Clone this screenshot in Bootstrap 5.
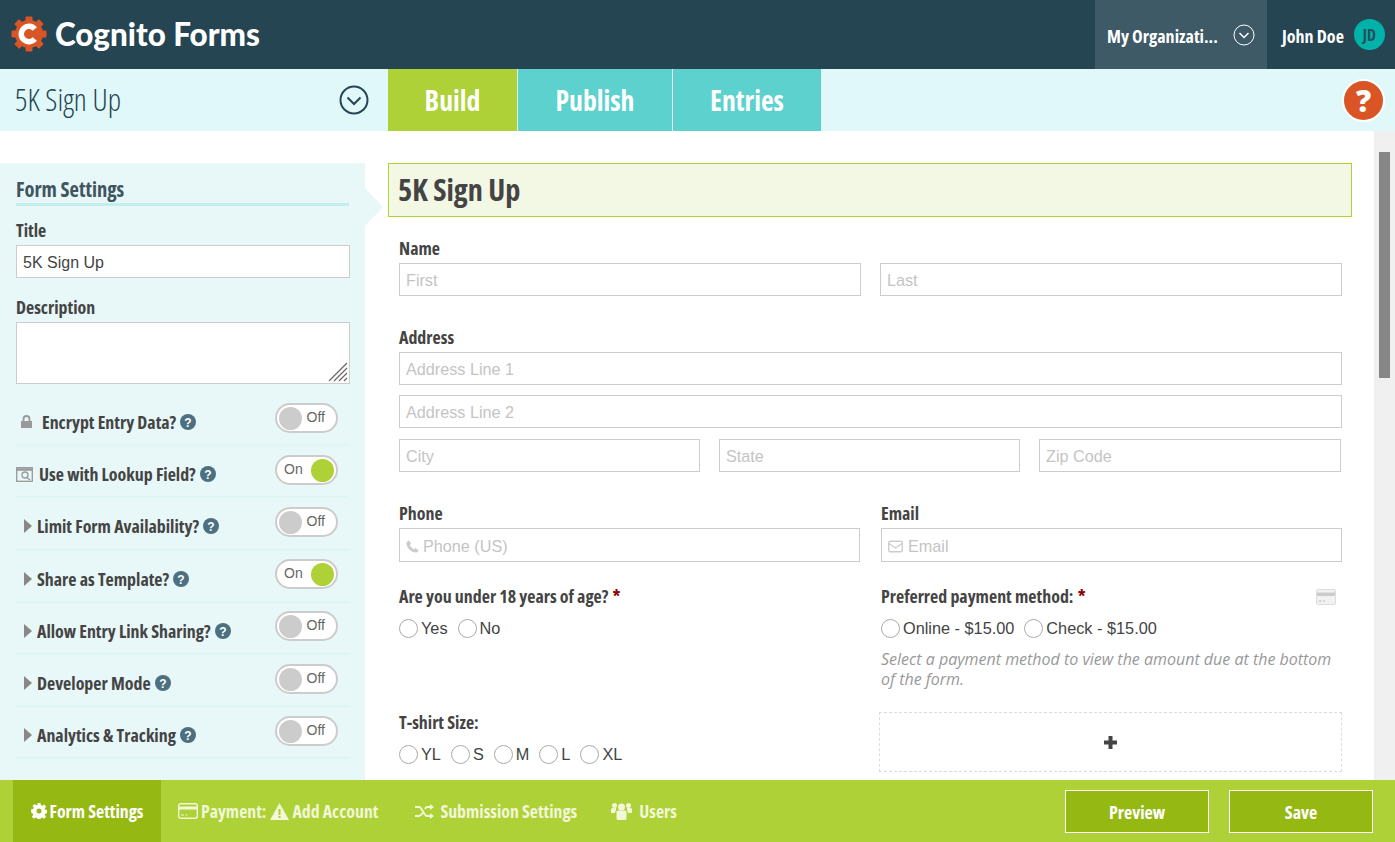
<!DOCTYPE html>
<html lang="en"><head><meta charset="utf-8"><title>Cognito Forms</title>
<link href="https://cdn.jsdelivr.net/npm/bootstrap@5.3.0/dist/css/bootstrap.min.css" rel="stylesheet">
<style>
html,body{height:842px;overflow:hidden}
body{font-family:"Liberation Sans",Arial,sans-serif;color:#444;background:#fff;width:1395px;display:flex;flex-direction:column}
.cond{font-family:"Open Sans",sans-serif;font-stretch:75%;font-weight:700}
.topbar{height:69px;background:#254552;flex:none}
.brand-name{font-family:"Lato","Inter",sans-serif;font-weight:900;font-size:31.400px;color:#fff;margin-left:8px;white-space:nowrap}
.logo-mark{margin-left:3px;margin-top:-2px}
.org-box{width:172px;background:#3d5a66;color:#fff;font-size:18px;padding-left:12px;padding-right:12px}
.org-box>span{margin-top:4px}
.user-box{width:128px;color:#fff;font-size:18px;padding-left:15px;white-space:nowrap}
.user-name{margin-top:4px}
.avatar{width:31px;height:31px;border-radius:50%;background:#00b2a9;color:#25505c;font-size:16px;margin-left:10px;flex:none}
.subbar{height:62px;background:#e1f8fa;flex:none}
.form-pick{width:388px;padding:0 19px 0 15px;font-family:"Open Sans",sans-serif;font-stretch:75%;font-weight:300;font-size:30.400px;color:#254552}
.tabx{height:62px;font-size:27.700px;color:#fff;background:#5cd1cd;border-right:1px solid #e1f8fa;justify-content:center;padding-top:1px}
.tabx.on{background:#add136;width:130px}
.tab-p{width:155px}.tab-e{width:148px;border-right:0}
.help{width:39px;height:39px;border-radius:50%;background:#d95525;border:2px solid #fff;color:#fff;font-size:30px;font-family:"Open Sans",sans-serif;font-weight:800;margin-right:10px;box-sizing:content-box}
.workarea{flex:1;min-height:0;overflow:hidden}
.side{width:365px;margin-top:32px;background:#e8f7f8;padding:14px 15px 0 16px;position:relative;flex:none}
.side::after{content:"";position:absolute;left:365px;top:25px;border-style:solid;border-width:19px 0 19px 18px;border-color:transparent transparent transparent #e8f7f8}
.side-head{font-size:20.500px;line-height:24px;color:#3f5560;border-bottom:3px solid #c3eeee;padding-bottom:2px;margin-right:1px}
.lab{font-size:17.900px;line-height:24px;color:#444;white-space:nowrap}
.inp{border:1px solid #ccc;background:#fff;font-size:16px;color:#444;height:33px;line-height:33px;padding:0 6px;display:block;width:100%}
.desc{height:62px;position:relative;margin-top:3px}
.grip{position:absolute;right:1px;bottom:1px}
.setrow{height:52.200px;border-bottom:2px solid #e0f6f6;padding-right:11px;padding-top:6px;margin-right:1px}
.q{width:16px;height:16px;margin-left:4px;flex:none}
.ico{flex:none}
.tog{width:63px;height:30px;border-radius:15px;background:#fff;border:2px solid #ccc;position:relative;font-size:14px;color:#666;margin-left:auto;flex:none;margin-top:-9px}
.tog i{position:absolute;width:23px;height:23px;border-radius:50%;top:2px;background:#ccc;left:2px}
.tog span{position:absolute;top:3px;line-height:18px;right:11px}
.tog.yes i{left:auto;right:2px;background:#add136}
.tog.yes span{right:auto;left:7px}
.lock-lab{margin-left:1px}
.look-lab{margin-left:2px}
.tri-lab{margin-left:1px}
.canvas{flex:1;padding:32px 22px 0 23px;min-width:0}
.title-band{height:54px;background:#f3f8e4;border:1px solid #add136;font-size:30.300px;line-height:52px;padding-left:9px;color:#444}
.fgrid{padding:0 10px 0 11px}
.flab{font-size:17.900px;line-height:24px;color:#444;display:block;margin-bottom:3px}
.ph{border:1px solid #ccc;height:33px;line-height:33px;color:#c4c4c4;font-size:16.200px;padding-left:6px;background:#fff}
.ph-tall{height:34px;line-height:34px}
.ph svg{vertical-align:-1px}
.gap-phone{margin-right:4px}
.gap-mail{margin-right:5px}
.cols{display:grid;grid-template-columns:462px 462px;column-gap:19px}
.cols3{display:grid;grid-template-columns:301px 301px 302px;column-gap:19px}
.shift1{margin-left:1px}
.radio{width:19px;height:19px;border-radius:50%;border:1px solid #aaa;background:#fff;display:inline-block;flex:none;margin-right:3px}
.opts{font-size:16.300px;line-height:20px;color:#444;column-gap:10px;margin-top:10px}
.req{color:#8b0000;margin-left:1px}
.hint{font-family:"Open Sans",sans-serif;font-style:italic;font-size:16px;line-height:20px;color:#999;margin-top:11px}
.adder{border:1px dashed #ddd;height:60px;margin-left:-1px;margin-top:5px}
.qcol{height:123px}
.track{width:21px;background:#f0f0f0;flex:none;padding-top:21px}
.thumb{height:226px;width:11px;background:#868686;margin-left:5px}
.foot{height:62px;background:#add136;flex:none;padding-left:13px;padding-right:22px;z-index:2}
.foot-tab{height:62px;color:#f1f7d7;font-size:17.800px;padding:0 17px;white-space:nowrap}
.foot-tab.on{background:#96b812;color:#fff;width:148px;padding:0}
.foot-tab.sub{padding-left:20px;padding-right:15px}
.foot-tab.usr{padding-left:19px}
.foot-tab svg{margin-right:3px}
.foot-tab.sub svg{margin-right:6px}
.foot-tab.usr svg{margin-right:7px}
.fbtn{width:144px;height:43px;background:#96b812;border:1px solid #fff;color:#fff;font-size:18px;border-radius:0;padding:2px 0 0}
.fbtn:hover{background:#96b812;color:#fff;border-color:#fff}
</style></head><body>
<header class="topbar d-flex align-items-stretch">
 <div class="d-flex align-items-center ps-2 flex-grow-1">
  <svg class="ico logo-mark" width="36" height="36" viewBox="0 0 36 36"><g fill="#d95525"><circle cx="18" cy="18" r="14"/><rect x="14.500" y="0.500" width="7" height="35" rx="1"/><rect x="0.500" y="14.500" width="35" height="7" rx="1"/><rect x="14.500" y="0.500" width="7" height="35" rx="1" transform="rotate(45 18 18)"/><rect x="14.500" y="0.500" width="7" height="35" rx="1" transform="rotate(-45 18 18)"/></g><path d="M23.800 13a7.700 7.700 0 1 0 0 10" fill="none" stroke="#fff" stroke-width="5.500"/></svg>
  <span class="brand-name">Cognito Forms</span>
 </div>
 <div class="org-box d-flex align-items-center justify-content-between cond"><span>My Organizati...</span>
  <svg width="22" height="22" viewBox="0 0 22 22" fill="none" stroke="#fff"><circle cx="11" cy="11" r="10"/><path d="M6.500 9l4.500 4.500L15.500 9" stroke-width="1.500"/></svg></div>
 <div class="user-box d-flex align-items-center cond"><span class="user-name">John Doe</span><span class="avatar d-flex align-items-center justify-content-center">JD</span></div>
</header>
<div class="subbar d-flex">
 <div class="form-pick d-flex align-items-center justify-content-between"><span>5K Sign Up</span>
  <svg width="30" height="30" viewBox="0 0 30 30" fill="none" stroke="#254552" stroke-width="2"><circle cx="15" cy="15" r="13.500"/><path d="M8.500 12.500L15 19l6.500-6.500"/></svg></div>
 <div class="tabx on cond d-flex align-items-center">Build</div>
 <div class="tabx tab-p cond d-flex align-items-center">Publish</div>
 <div class="tabx tab-e cond d-flex align-items-center">Entries</div>
 <div class="ms-auto d-flex align-items-center"><div class="help d-flex align-items-center justify-content-center">?</div></div>
</div>
<div class="workarea d-flex">
 <aside class="side">
  <div class="side-head cond">Form Settings</div>
  <div class="lab cond mt-2 pt-1">Title</div>
  <div class="inp" style="margin-top:3px">5K Sign Up</div>
  <div class="lab cond" style="margin-top:17px">Description</div>
  <div class="inp desc"><svg class="grip" width="20" height="20" viewBox="0 0 20 20" stroke="#666" stroke-width="1.200"><path d="M1 19L19 1M6 19L19 6M11 19l8-8M16 19l3-3"/></svg></div>
  <div class="setrow d-flex align-items-center" style="margin-top:10px">
   <svg class="ico ms-1 me-2" width="13" height="14" viewBox="0 0 13 14" fill="#999"><path d="M1 6h11v7H1z"/><path d="M3.500 6V4a3 3 0 0 1 6 0v2" fill="none" stroke="#999" stroke-width="1.800"/></svg>
   <span class="lab cond lock-lab">Encrypt Entry Data?</span>
   <svg class="q" viewBox="0 0 16 16"><circle cx="8" cy="8" r="8" fill="#4d7080"/><text x="8" y="12.500" text-anchor="middle" font-family="Liberation Sans" font-weight="700" font-size="12" fill="#fff">?</text></svg>
   <div class="tog"><i></i><span>Off</span></div>
  </div>
  <div class="setrow d-flex align-items-center">
   <svg class="ico me-1" width="17" height="15" viewBox="0 0 17 15" fill="none" stroke="#999" stroke-width="1.300"><rect x=".7" y=".7" width="15.600" height="13.600"/><path d="M.7 2.500h15.600" stroke-width="2.500"/><circle cx="9" cy="8" r="3"/><path d="M11 10.500l3 2.500"/></svg>
   <span class="lab cond look-lab">Use with Lookup Field?</span>
   <svg class="q" viewBox="0 0 16 16"><circle cx="8" cy="8" r="8" fill="#4d7080"/><text x="8" y="12.500" text-anchor="middle" font-family="Liberation Sans" font-weight="700" font-size="12" fill="#fff">?</text></svg>
   <div class="tog yes"><i></i><span>On</span></div>
  </div>
  <div class="setrow d-flex align-items-center">
   <svg class="ico ms-2 me-1" width="8" height="14" viewBox="0 0 8 14" fill="#888"><path d="M0 0l8 7-8 7z"/></svg>
   <span class="lab cond tri-lab">Limit Form Availability?</span>
   <svg class="q" viewBox="0 0 16 16"><circle cx="8" cy="8" r="8" fill="#4d7080"/><text x="8" y="12.500" text-anchor="middle" font-family="Liberation Sans" font-weight="700" font-size="12" fill="#fff">?</text></svg>
   <div class="tog"><i></i><span>Off</span></div>
  </div>
  <div class="setrow d-flex align-items-center">
   <svg class="ico ms-2 me-1" width="8" height="14" viewBox="0 0 8 14" fill="#888"><path d="M0 0l8 7-8 7z"/></svg>
   <span class="lab cond tri-lab">Share as Template?</span>
   <svg class="q" viewBox="0 0 16 16"><circle cx="8" cy="8" r="8" fill="#4d7080"/><text x="8" y="12.500" text-anchor="middle" font-family="Liberation Sans" font-weight="700" font-size="12" fill="#fff">?</text></svg>
   <div class="tog yes"><i></i><span>On</span></div>
  </div>
  <div class="setrow d-flex align-items-center">
   <svg class="ico ms-2 me-1" width="8" height="14" viewBox="0 0 8 14" fill="#888"><path d="M0 0l8 7-8 7z"/></svg>
   <span class="lab cond tri-lab">Allow Entry Link Sharing?</span>
   <svg class="q" viewBox="0 0 16 16"><circle cx="8" cy="8" r="8" fill="#4d7080"/><text x="8" y="12.500" text-anchor="middle" font-family="Liberation Sans" font-weight="700" font-size="12" fill="#fff">?</text></svg>
   <div class="tog"><i></i><span>Off</span></div>
  </div>
  <div class="setrow d-flex align-items-center">
   <svg class="ico ms-2 me-1" width="8" height="14" viewBox="0 0 8 14" fill="#888"><path d="M0 0l8 7-8 7z"/></svg>
   <span class="lab cond tri-lab">Developer Mode</span>
   <svg class="q" viewBox="0 0 16 16"><circle cx="8" cy="8" r="8" fill="#4d7080"/><text x="8" y="12.500" text-anchor="middle" font-family="Liberation Sans" font-weight="700" font-size="12" fill="#fff">?</text></svg>
   <div class="tog"><i></i><span>Off</span></div>
  </div>
  <div class="setrow d-flex align-items-center">
   <svg class="ico ms-2 me-1" width="8" height="14" viewBox="0 0 8 14" fill="#888"><path d="M0 0l8 7-8 7z"/></svg>
   <span class="lab cond tri-lab">Analytics &amp; Tracking</span>
   <svg class="q" viewBox="0 0 16 16"><circle cx="8" cy="8" r="8" fill="#4d7080"/><text x="8" y="12.500" text-anchor="middle" font-family="Liberation Sans" font-weight="700" font-size="12" fill="#fff">?</text></svg>
   <div class="tog"><i></i><span>Off</span></div>
  </div>
 </aside>
 <main class="canvas">
  <div class="title-band cond">5K Sign Up</div>
  <div class="fgrid">
   <div style="margin-top:19px"><span class="flab cond">Name</span>
    <div class="cols"><div class="ph">First</div><div class="ph">Last</div></div></div>
   <div style="margin-top:29px"><span class="flab cond">Address</span>
    <div class="ph">Address Line 1</div>
    <div class="ph" style="margin-top:10px">Address Line 2</div>
    <div class="cols3" style="margin-top:11px"><div class="ph">City</div><div class="ph">State</div><div class="ph">Zip Code</div></div></div>
   <div class="cols" style="margin-top:29px">
    <div><span class="flab cond">Phone</span><div class="ph ph-tall" style="margin-right:1px"><svg class="gap-phone" width="13" height="13" viewBox="0 0 13 13" fill="#ccc"><path d="M3 .5L5 3.500 3.800 5c.7 1.600 2.300 3.300 4.200 4.200L9.500 8l3 2.200c-.4 1.500-1.500 2.500-3 2.300C4.500 11.800 1 8 .5 3.500.4 2 1.500 1 3 .5z"/></svg>Phone (US)</div></div>
    <div class="shift1"><span class="flab cond">Email</span><div class="ph ph-tall"><svg class="gap-mail" width="15" height="13" viewBox="0 0 15 13" fill="none" stroke="#ccc" stroke-width="1.400"><rect x=".7" y="1.200" width="13.600" height="10.600" rx="1.500"/><path d="M1 3.500l6.500 4.500L14 3.500"/></svg>Email</div></div>
   </div>
   <div class="cols" style="margin-top:22px">
    <div class="qcol"><span class="flab cond">Are you under 18 years of age? <span class="req">*</span></span>
     <div class="opts d-flex align-items-center"><span class="d-flex align-items-center"><i class="radio"></i>Yes</span><span class="d-flex align-items-center"><i class="radio"></i>No</span></div></div>
    <div class="position-relative shift1"><span class="flab cond">Preferred payment method: <span class="req">*</span></span>
     <svg class="position-absolute" style="right:6px;top:5px" width="20" height="16" viewBox="0 0 20 16"><rect x=".5" y=".5" width="19" height="15" rx="1.500" fill="#f2f2f2" stroke="#ddd"/><rect x="1" y="3.500" width="18" height="3.500" fill="#ccc"/><path d="M2.500 12h3M7 12h2" stroke="#bbb"/></svg>
     <div class="opts d-flex align-items-center"><span class="d-flex align-items-center"><i class="radio"></i>Online - $15.00</span><span class="d-flex align-items-center"><i class="radio"></i>Check - $15.00</span></div>
     <div class="hint">Select a payment method to view the amount due at the bottom of the form.</div></div>
   </div>
   <div class="cols">
    <div><span class="flab cond" style="margin-top:3px">T-shirt Size:</span>
     <div class="opts d-flex align-items-center"><span class="d-flex align-items-center"><i class="radio"></i>YL</span><span class="d-flex align-items-center"><i class="radio"></i>S</span><span class="d-flex align-items-center"><i class="radio"></i>M</span><span class="d-flex align-items-center"><i class="radio"></i>L</span><span class="d-flex align-items-center"><i class="radio"></i>XL</span></div></div>
    <div class="adder d-flex align-items-center justify-content-center"><svg width="15" height="15" viewBox="0 0 15 15" fill="#444"><path d="M5.500 1h4v4.500H14v4H9.500V14h-4V9.500H1v-4h4.500z"/></svg></div>
   </div>
  </div>
 </main>
 <div class="track"><div class="thumb"></div></div>
</div>
<footer class="foot d-flex align-items-center">
 <div class="foot-tab on cond d-flex align-items-center justify-content-center"><svg width="16" height="16" viewBox="0 0 16 16"><path fill="#fff" fill-rule="evenodd" d="M6.500 0h3l.4 2.200 1.300.6L13.100 1.500l2 2-1.300 1.900.6 1.300 2.200.4v3l-2.200.4-.6 1.300 1.300 1.900-2 2-1.900-1.300-1.300.6-.4 2.200h-3l-.4-2.200-1.300-.6-1.900 1.300-2-2 1.300-1.900-.6-1.300L0 9.500v-3l2.200-.4.6-1.300L1.500 3l2-2 1.900 1.300 1.300-.6zM8 5.500a2.500 2.500 0 1 0 0 5 2.500 2.500 0 0 0 0-5z"/></svg>Form Settings</div>
 <div class="foot-tab cond d-flex align-items-center"><svg width="20" height="16" viewBox="0 0 20 16"><rect x=".7" y=".7" width="18.600" height="14.600" rx="2" fill="none" stroke="#f1f7d7" stroke-width="1.400"/><rect x="1" y="3.500" width="18" height="3" fill="#f1f7d7"/><path d="M3 12h3M7.500 12h2" stroke="#f1f7d7"/></svg>Payment:<svg class="ms-1" width="19" height="17" viewBox="0 0 19 17"><path fill="#f1f7d7" d="M9.500 0L19 17H0z"/><path d="M8.500 6h2v6h-2zM8.500 13h2v2h-2z" fill="#add136"/></svg>Add Account</div>
 <div class="foot-tab sub cond d-flex align-items-center"><svg width="19" height="15" viewBox="0 0 19 15" fill="none" stroke="#f1f7d7" stroke-width="2"><path d="M0 3h4c3 0 5 9 8 9h4M0 12h4c1.500 0 2.500-1.500 3.500-3M10 5c.6-1 1.200-2 2-2h4"/><path d="M15 0l4 3-4 3zM15 9l4 3-4 3z" fill="#f1f7d7" stroke="none"/></svg>Submission Settings</div>
 <div class="foot-tab usr cond d-flex align-items-center"><svg width="21" height="18" viewBox="0 0 21 18" fill="#f1f7d7"><circle cx="10.500" cy="5" r="3.500"/><circle cx="3.500" cy="3.500" r="2.500"/><circle cx="17.500" cy="3.500" r="2.500"/><path d="M5.500 10c0-1 1-1.500 2-1.500h6c1 0 2 .5 2 1.500v6.500c0 1-1 1.500-2 1.500h-6c-1 0-2-.5-2-1.500zM0 7.500C0 6.500 1 6 2 6h3v2.500C4.500 9 4 10 4 11H0zM21 7.500c0-1-1-1.500-2-1.500h-3v2.500c.5.500 1 1.500 1 2.500h4z"/></svg>Users</div>
 <button type="button" class="btn fbtn cond ms-auto">Preview</button>
 <button type="button" class="btn fbtn cond" style="margin-left:20px">Save</button>
</footer>
</body></html>
